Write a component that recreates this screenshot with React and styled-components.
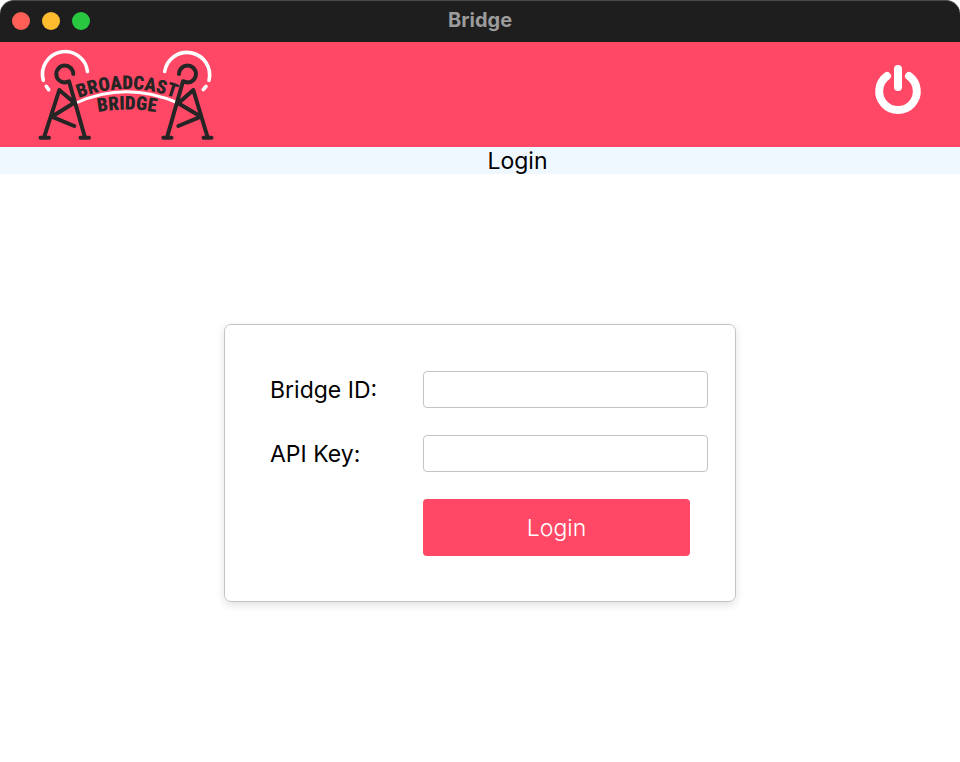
import { useState } from "react"
import styled, { createGlobalStyle } from "styled-components"

const GlobalStyle = createGlobalStyle`
    * {
        box-sizing: border-box;
    }
    body {
        margin: 0;
        background: white;
        color: black;
        font-family: Inter, "Liberation Sans", sans-serif;
        font-size: 23px;
    }
`

const Window = styled.div`
    display: flex;
    flex-direction: column;
    min-height: 100vh;
`

const TitleBar = styled.div`
    display: grid;
    grid-template-columns: 1fr auto 1fr;
    align-items: center;
    height: 42px;
    padding: 0 12px 2px;
    background: #1e1e1e;
    border-top: 1px solid #4a4a4a;
    border-radius: 14px 14px 0 0;
`

const Lights = styled.div`
    display: flex;
    gap: 12px;
`

const Light = styled.button`
    width: 18px;
    height: 18px;
    padding: 0;
    border: none;
    border-radius: 50%;
    background: ${props => props.$color};
`

const Title = styled.div`
    color: #9b9b9b;
    font-size: 20px;
    font-weight: 700;
    line-height: 24px;
    padding-bottom: 2px;
`

const Header = styled.header`
    display: flex;
    align-items: center;
    justify-content: space-between;
    padding: 5px 36px;
    background: #ff4865;
`

const LogoSvg = styled.svg`
    display: block;
    width: 180px;
    height: 95px;
`

const LogoText = styled.text`
    font-family: "Roboto Condensed", Roboto, "Liberation Sans", sans-serif;
    font-size: 19px;
    font-weight: 900;
    fill: #252525;
`

const PowerButton = styled.button`
    display: flex;
    padding: 0 0 10px;
    border: none;
    background: transparent;
    cursor: pointer;
`

const PageTitle = styled.h1`
    margin: 0;
    padding: 2px 0 0 75px;
    background: #f0f8ff;
    font-size: 23px;
    font-weight: 400;
    line-height: 25px;
    text-align: center;
`

const Main = styled.main`
    display: flex;
    flex: 1;
    align-items: center;
    justify-content: center;
    padding: 0 16px 10px;
`

const Card = styled.form`
    display: grid;
    grid-template-columns: 126px 1fr;
    gap: 27px;
    align-items: center;
    width: 100%;
    max-width: 512px;
    padding: 46px 27px 45px 45px;
    border: 1px solid #c4c4c4;
    border-radius: 7px;
    box-shadow: 0 3px 9px rgba(0, 0, 0, 0.12);
`

const Label = styled.label`
    padding-top: 2px;
    line-height: 35px;
`

const Input = styled.input`
    width: 100%;
    height: 37px;
    padding: 0 8px;
    border: 1px solid #c4c4c4;
    border-radius: 4px;
    background: white;
    font: inherit;
`

const LoginButton = styled.button`
    grid-column: 2;
    height: 57px;
    margin-right: 18px;
    padding-top: 2px;
    border: none;
    border-radius: 4px;
    background: #ff4865;
    color: white;
    font: inherit;
    font-weight: 300;
    cursor: pointer;
`

const Logo = () => (
    <LogoSvg viewBox="0 0 180 95" fill="none" strokeLinecap="round" strokeLinejoin="round" role="img" aria-label="Broadcast Bridge">
        <defs>
            <path id="arcTop" d="M31 56Q91 28 151 56" />
            <path id="arcBottom" d="M46 69Q91 56 136 69" />
        </defs>
        {/* signal waves and the span between the towers */}
        <g stroke="white" strokeWidth="3.6">
            <path d="M51.500 24.500A22.600 22.600 0 1 0 7.300 33.300M10.300 39.300L12.700 42.700" />
            <path d="M128.700 24.500A22.600 22.600 0 1 1 173 33.300M170 39.300L167.300 42.700" />
            <path strokeWidth="3" d="M40 56Q90 33.500 142 56" />
        </g>
        {/* towers */}
        <g stroke="#252525" strokeWidth="4">
            <path d="M37.300 27A8.500 8.500 0 1 0 29 35.500L33 34.300L49 90.500M44.500 90.700H53M23.300 43L8 90.500M4.500 90.700H13M23.300 43L38.300 55.700L15.700 69.700L38.300 79" />
            <path d="M143 27A8.500 8.500 0 1 1 151.500 35.500L147 34.300L131 90.500M127.300 90.700H135.500M157.300 43L171.700 90.500M167.500 90.700H175.500M157.300 43L142.300 56.300L165 69.700L142.300 79" />
        </g>
        <LogoText>
            <textPath href="#arcTop" startOffset="50%" textAnchor="middle">BROADCAST</textPath>
        </LogoText>
        <LogoText>
            <textPath href="#arcBottom" startOffset="50%" textAnchor="middle">BRIDGE</textPath>
        </LogoText>
    </LogoSvg>
)

const PowerIcon = () => (
    <svg width="52" height="52" viewBox="0 0 52 52" fill="none" stroke="white" strokeWidth="8" strokeLinecap="round">
        <path d="M26 5V23M15 12A18.800 18.800 0 1 0 37 12" />
    </svg>
)

const App = () => {
    const [bridgeId, setBridgeId] = useState("")
    const [apiKey, setApiKey] = useState("")

    return (
        <Window>
            <GlobalStyle />
            <TitleBar>
                <Lights>
                    <Light $color="#ff5f57" aria-label="Close" />
                    <Light $color="#febc2e" aria-label="Minimize" />
                    <Light $color="#28c840" aria-label="Zoom" />
                </Lights>
                <Title>Bridge</Title>
            </TitleBar>
            <Header>
                <Logo />
                <PowerButton aria-label="Quit">
                    <PowerIcon />
                </PowerButton>
            </Header>
            <PageTitle>Login</PageTitle>
            <Main>
                <Card onSubmit={e => e.preventDefault()}>
                    <Label htmlFor="bridgeId">Bridge ID:</Label>
                    <Input id="bridgeId" value={bridgeId} onChange={e => setBridgeId(e.target.value)} />
                    <Label htmlFor="apiKey">API Key:</Label>
                    <Input id="apiKey" value={apiKey} onChange={e => setApiKey(e.target.value)} />
                    <LoginButton type="submit">Login</LoginButton>
                </Card>
            </Main>
        </Window>
    )
}

export default App
